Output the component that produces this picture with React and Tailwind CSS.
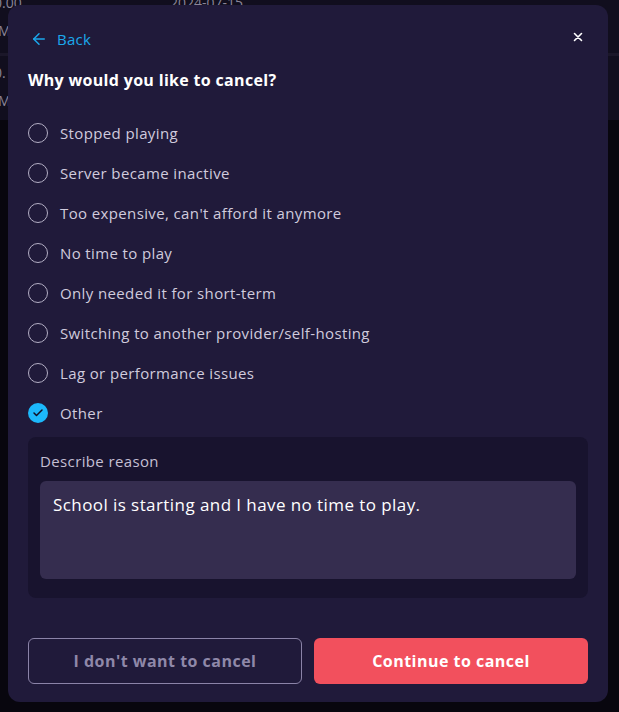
import React, { useState } from 'react'
import { ArrowLeft, Check } from 'lucide-react'

const reasons = [
  'Stopped playing',
  'Server became inactive',
  "Too expensive, can't afford it anymore",
  'No time to play',
  'Only needed it for short-term',
  'Switching to another provider/self-hosting',
  'Lag or performance issues',
  'Other',
]

const App = () => {
  const [selected, setSelected] = useState('Other')
  const [reason, setReason] = useState('School is starting and I have no time to play.')

  return (
    <div className="relative h-[712px] w-full overflow-hidden bg-[#08060e] text-white" style={{ fontFamily: '"Open Sans", "Liberation Sans", sans-serif' }}>
      {/* page behind the modal */}
      <div className="bg-[#110e1e] text-[14px] text-[#8a8599]">
        <div className="relative h-[53px]">
          <span className="absolute left-[-6px] top-[-8px]">0.00</span>
          <span className="absolute left-[170px] top-[-8px]">2024-07-15</span>
          <span className="absolute left-[-2px] top-[20px]">M</span>
        </div>
        <div className="h-[3px] bg-[#1b1729]"></div>
        <div className="relative h-[64px]">
          <span className="absolute left-[-6px] top-[6px]">0.</span>
          <span className="absolute left-[-2px] top-[34px]">M</span>
        </div>
      </div>

      {/* modal */}
      <div className="absolute left-[8px] top-[5px] w-[600px] rounded-xl bg-[#201a3a] px-5 pb-[18px] pt-[24px]">
        <div className="flex h-5 items-center justify-between">
          <button className="flex items-center gap-[9px] pl-[2px] text-[15px] tracking-[0.02em] text-[#1ba8ec]">
            <ArrowLeft size={18} strokeWidth={2} />
            Back
          </button>
          <button className="mr-[5px] mt-[-4px] text-white">
            <svg width="10" height="10" viewBox="0 0 10 10" stroke="currentColor" strokeWidth="1.6" strokeLinecap="round">
              <path d="M1.5 1.5l7 7M8.5 1.5l-7 7" />
            </svg>
          </button>
        </div>

        <h2 className="mt-[19px] text-[16px] font-bold leading-6 tracking-[0.02em] text-white">Why would you like to cancel?</h2>

        <div className="mt-[21px] flex flex-col">
          {reasons.map((r) => (
            <label key={r} className="flex h-10 cursor-pointer items-center gap-3" onClick={() => setSelected(r)}>
              {selected === r ? (
                <span className="flex h-5 w-5 items-center justify-center rounded-full bg-[#1cb8fb] text-[#120e22]">
                  <Check size={12} strokeWidth={3} />
                </span>
              ) : (
                <span className="h-5 w-5 rounded-full border-[1.5px] border-[#b3aec4]"></span>
              )}
              <span className="text-[15px] tracking-[0.025em] text-[#d0cbdd]">{r}</span>
            </label>
          ))}
        </div>

        {selected === 'Other' && (
          <div className="mt-1 rounded-lg bg-[#18132e] px-3 pb-[19px] pt-[14px]">
            <div className="text-[15px] leading-5 tracking-[0.025em] text-[#c4bfd3]">Describe reason</div>
            <textarea
              className="mt-[10px] block h-[98px] w-full resize-none rounded-md bg-[#352d4f] px-[13px] pt-[12px] text-[17px] leading-6 tracking-[0.025em] text-white outline-none"
              value={reason}
              onChange={(e) => setReason(e.target.value)}
            />
          </div>
        )}

        <div className="mt-10 grid grid-cols-2 gap-3">
          <button className="h-[46px] rounded-md border border-[#8b83a8] text-[16px] font-bold tracking-[0.03em] text-[#8f88a9]">
            I don't want to cancel
          </button>
          <button className="h-[46px] rounded-md bg-[#f2505d] text-[16px] font-bold tracking-[0.03em] text-white">
            Continue to cancel
          </button>
        </div>
      </div>
    </div>
  )
}

export default App
